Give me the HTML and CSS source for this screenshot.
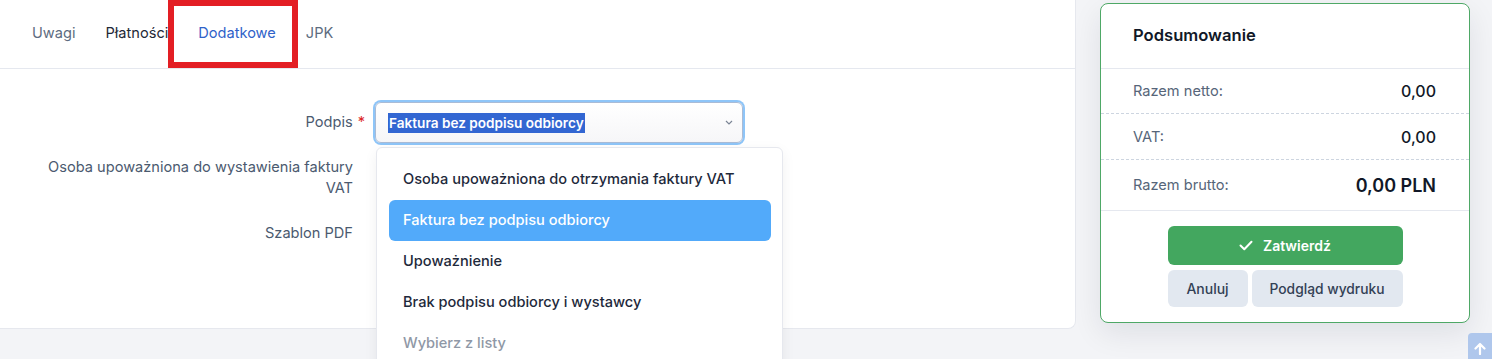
FILE: index.html
```html
<!DOCTYPE html>
<html lang="pl">
<head>
    <meta charset="UTF-8">
    <title>Faktura - Dodatkowe</title>
    <link rel="stylesheet" href="styles.css">
</head>
<body>
<div id="page">
    <div class="main">
        <ul class="tabs">
            <li>Uwagi</li>
            <li class="dark">Płatności</li>
            <li class="on">Dodatkowe</li>
            <li>JPK</li>
            <span class="mark"></span>
        </ul>
        <div class="form">
            <label>Podpis<em>*</em></label>
            <div class="field">
                <div class="select">
                    <span class="sel">Faktura bez podpisu odbiorcy</span>
                    <svg class="chev" width="8" height="5" viewBox="0 0 8 5"><path d="M1 1l3 3 3-3" fill="none" stroke="#7b8595" stroke-width="1.2"/></svg>
                </div>
                <ul class="drop">
                    <li>Osoba upoważniona do otrzymania faktury VAT</li>
                    <li class="on">Faktura bez podpisu odbiorcy</li>
                    <li>Upoważnienie</li>
                    <li>Brak podpisu odbiorcy i wystawcy</li>
                    <li class="muted">Wybierz z listy</li>
                </ul>
            </div>
            <label><span>Osoba upoważniona do wystawienia faktury</span><span>VAT</span></label>
            <div class="field"></div>
            <label>Szablon PDF</label>
            <div class="field"></div>
        </div>
    </div>
    <div class="side">
        <h3>Podsumowanie</h3>
        <div class="row"><span>Razem netto:</span><b>0,00</b></div>
        <div class="row"><span>VAT:</span><b>0,00</b></div>
        <div class="row total"><span>Razem brutto:</span><b>0,00 PLN</b></div>
        <div class="btns">
            <button class="ok">
                <svg width="14" height="11" viewBox="0 0 14 11"><path d="M1.5 5.5l3.8 3.8L12.5 1.8" fill="none" stroke="#fff" stroke-width="2" stroke-linecap="round" stroke-linejoin="round"/></svg>
                Zatwierdź
            </button>
            <div class="pair">
                <button class="grey">Anuluj</button>
                <button class="grey wide">Podgląd wydruku</button>
            </div>
        </div>
    </div>
</div>
<a class="up"><svg width="12" height="13" viewBox="0 0 12 13"><path d="M6 12V2M1.5 6.5L6 2l4.5 4.5" fill="none" stroke="#fff" stroke-width="2.2" stroke-linecap="round" stroke-linejoin="round"/></svg></a>
</body>
</html>
```

FILE: styles.css
```css
* {
    margin: 0;
    padding: 0;
    box-sizing: border-box;
    font-family: Inter, "Noto Sans", sans-serif;
}

li {
    list-style-type: none;
}
html, body {
    height: 359px;
    overflow: hidden;
}
body {
    background-color: #f3f4f7;
}
#page {
    display: flex;
    align-items: flex-start;
    gap: 24px;
}
.main {
    width: 1076px;
    height: 329px;
    background-color: #fff;
    border-right: 1px solid #e6e8ee;
    border-bottom: 1px solid #e6e8ee;
    border-radius: 0 0 8px 0;
}
.tabs {
    position: relative;
    display: flex;
    height: 69px;
    padding-left: 17px;
    border-bottom: 1px solid #e5e8ef;
}
.tabs li {
    padding: 0 15px;
    line-height: 66px;
    font-size: 14.6px;
    color: #5d6c80;
    border-bottom: 3px solid transparent;
}
.tabs li.dark {
    color: #1f2937;
}
.tabs li.on {
    color: #2f62c9;
    border-bottom-color: #3d9bf0;
}
.tabs .mark {
    position: absolute;
    top: 0;
    left: 168px;
    width: 130px;
    height: 68px;
    border: 6px solid #e31e24;
}
.form {
    display: grid;
    grid-template-columns: 320px 368px;
    grid-auto-rows: minmax(41px, auto);
    column-gap: 22px;
    row-gap: 14px;
    align-items: center;
    padding: 33px 0 0 33px;
}
.form label {
    text-align: right;
    font-size: 14.6px;
    line-height: 21px;
    color: #4b5a6f;
}
.form label span {
    display: block;
}
.form label em {
    font-style: normal;
    color: #dc2626;
    margin-left: 5px;
    margin-right: -12px;
}
.field {
    position: relative;
    height: 41px;
}
.select {
    display: flex;
    align-items: center;
    justify-content: space-between;
    height: 41px;
    padding: 0 9px 0 12px;
    border: 1px solid #a9bbd6;
    border-radius: 6px;
    box-shadow: 0 0 0 2px #8ec5f8;
    background: linear-gradient(#fff, #f6f6f8);
}
.select .sel {
    background-color: #3266d2;
    color: #fff;
    font-size: 13.6px;
    font-weight: 600;
    line-height: 20px;
    padding: 0 1px;
}
.drop {
    position: absolute;
    top: 45px;
    left: 1px;
    width: 407px;
    padding: 11px 11px 0 12px;
    height: 230px;
    background-color: #fff;
    border: 1px solid #e6e8ee;
    border-radius: 6px;
    box-shadow: 0 4px 14px rgba(15, 23, 42, .06);
    z-index: 2;
}
.drop li {
    height: 41px;
    line-height: 41px;
    padding-left: 14px;
    font-size: 14.6px;
    font-weight: 500;
    color: #1e293b;
    border-radius: 6px;
}
.drop li.on {
    background-color: #52aafa;
    color: #fff;
}
.drop li.muted {
    color: #8f98a6;
}
.side {
    width: 370px;
    margin-top: 3px;
    background-color: #fff;
    border: 1px solid #4ea866;
    border-radius: 8px;
    box-shadow: 0 10px 30px rgba(15, 23, 42, .09);
}
.side h3 {
    height: 65px;
    line-height: 62px;
    padding-left: 32px;
    font-size: 16.6px;
    font-weight: 600;
    color: #111827;
    border-bottom: 1px solid #e5e8ef;
}
.row {
    display: flex;
    justify-content: space-between;
    align-items: center;
    height: 46px;
    padding: 0 33px 0 32px;
    border-bottom: 1px dashed #cdd5e0;
}
.row:first-of-type {
    height: 45px;
}
.row span {
    font-size: 14.6px;
    color: #566579;
}
.row b {
    font-size: 16px;
    font-weight: 500;
    color: #111827;
}
.row.total {
    height: 51px;
    border-bottom: 1px solid #e5e8ef;
}
.row.total b {
    font-size: 18px;
    font-weight: 600;
}
.btns {
    display: flex;
    flex-direction: column;
    align-items: center;
    gap: 5px;
    padding: 15px 0 15px;
}
.btns button {
    border: none;
    border-radius: 6px;
    font-size: 14px;
    font-weight: 500;
}
.ok {
    display: flex;
    align-items: center;
    justify-content: center;
    gap: 10px;
    width: 235px;
    height: 39px;
    background-color: #43a75f;
    color: #fff;
}
.btns .ok {
    font-weight: 600;
}
.pair {
    display: flex;
    gap: 4px;
}
.grey {
    width: 80px;
    height: 37px;
    background-color: #e2e8f0;
    color: #334155;
}
.btns .wide {
    width: 151px;
    font-size: 13.8px;
}
.up {
    position: fixed;
    right: 0;
    bottom: 0;
    width: 24px;
    height: 26px;
    display: flex;
    align-items: center;
    justify-content: center;
    padding-top: 4px;
    background-color: #afc7ec;
    border-radius: 4px 0 0 0;
}
```
